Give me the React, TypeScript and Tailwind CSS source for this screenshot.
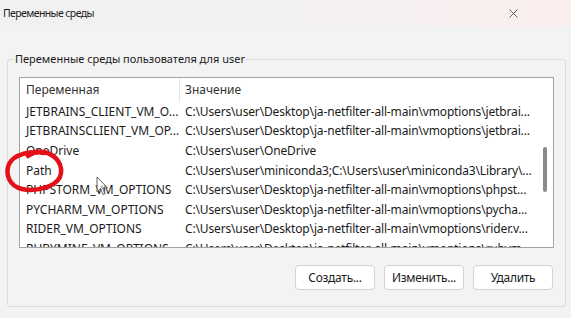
import { X } from 'lucide-react';

const rows = [
  { name: 'JETBRAINS_CLIENT_VM_O...', value: 'C:\\Users\\user\\Desktop\\ja-netfilter-all-main\\vmoptions\\jetbrai...' },
  { name: 'JETBRAINSCLIENT_VM_OP...', value: 'C:\\Users\\user\\Desktop\\ja-netfilter-all-main\\vmoptions\\jetbrai...' },
  { name: 'OneDrive', value: 'C:\\Users\\user\\OneDrive' },
  { name: 'Path', value: 'C:\\Users\\user\\miniconda3;C:\\Users\\user\\miniconda3\\Library\\...' },
  { name: 'PHPSTORM_VM_OPTIONS', value: 'C:\\Users\\user\\Desktop\\ja-netfilter-all-main\\vmoptions\\phpst...' },
  { name: 'PYCHARM_VM_OPTIONS', value: 'C:\\Users\\user\\Desktop\\ja-netfilter-all-main\\vmoptions\\pycha...' },
  { name: 'RIDER_VM_OPTIONS', value: 'C:\\Users\\user\\Desktop\\ja-netfilter-all-main\\vmoptions\\rider.v...' },
  { name: 'RUBYMINE_VM_OPTIONS', value: 'C:\\Users\\user\\Desktop\\ja-netfilter-all-main\\vmoptions\\rubym...' },
];

const buttons = ['Создать...', 'Изменить...', 'Удалить'];

const App = () => {
  return (
    <div
      className="relative w-[571px] h-[318px] overflow-hidden bg-[#f3f3f3] text-[#1b1b1b] text-[12px]"
      style={{ fontFamily: '"Segoe UI", "Noto Sans", sans-serif' }}
    >
      {/* title bar */}
      <div className="h-[26px] flex items-center justify-between pl-[3px] pr-[50px] bg-gradient-to-r from-[#f1f1f1] via-[#f3f1f1] to-[#fbeeee]">
        <span className="text-[10.5px] tracking-[-0.6px] leading-none">Переменные среды</span>
        <X size={15} strokeWidth={1.2} className="text-[#333]" />
      </div>

      <fieldset className="mt-[25px] ml-[7px] w-[559px] h-[256px] border border-[#dcdcdc] rounded-[3px] px-[11px] pb-[17px]">
        <legend className="-ml-[5px] px-[1px] leading-[16px] text-[11px]">Переменные среды пользователя для user</legend>

        <div className="mt-[10px] h-[171px] border border-[#a3a3a3] bg-white flex overflow-hidden">
          <div className="flex-1 min-w-0 overflow-hidden">
            <div className="h-[24px] flex items-center text-[#333]">
              <div className="w-[160px] h-full flex items-center pl-[6px] border-r border-[#e5e5e5]">Переменная</div>
              <div className="pl-[5px]">Значение</div>
            </div>
            {rows.map((row) => (
              <div key={row.name} className="h-[19.6px] flex items-center whitespace-nowrap">
                <div className="w-[160px] shrink-0 pl-[6px] overflow-hidden">{row.name}</div>
                <div className="pl-[5px] overflow-hidden tracking-[-0.15px]">{row.value}</div>
              </div>
            ))}
          </div>
          <div className="w-[18px] shrink-0 pt-[69px] flex justify-center">
            <div className="w-[4px] h-[45px] rounded-full bg-[#8a8a8a] ml-[2px]" />
          </div>
        </div>

        <div className="mt-[17px] flex justify-end gap-[9px] pr-[1px]">
          {buttons.map((b) => (
            <button
              key={b}
              className="w-[80px] h-[25px] bg-white border border-[#d3d3d3] rounded-[4px] text-[12px] tracking-[-0.3px] text-[#1b1b1b]"
            >
              {b}
            </button>
          ))}
        </div>
      </fieldset>

      {/* red marker circle around Path */}
      <svg className="absolute left-0 top-0 pointer-events-none" width="80" height="200" viewBox="0 0 80 200">
        <path
          d="M44 153 C32 150 14 154 9 164 C5 174 9 186 22 189 C36 192 55 187 60 177 C64 166 57 155 44 152 C38 151 32 153 28 156"
          fill="none"
          stroke="#e3101a"
          strokeWidth="4.5"
          strokeLinecap="round"
        />
      </svg>

      {/* mouse cursor */}
      <svg className="absolute left-[96px] top-[176px] pointer-events-none" width="13" height="21" viewBox="0 0 13 21">
        <path d="M1 1 L1 16 L4.5 12.5 L7 18.5 L9 17.6 L6.6 11.8 L11.5 11.8 Z" fill="white" fillOpacity="0.6" stroke="#666" strokeWidth="1" />
      </svg>
    </div>
  );
};

export default App;
